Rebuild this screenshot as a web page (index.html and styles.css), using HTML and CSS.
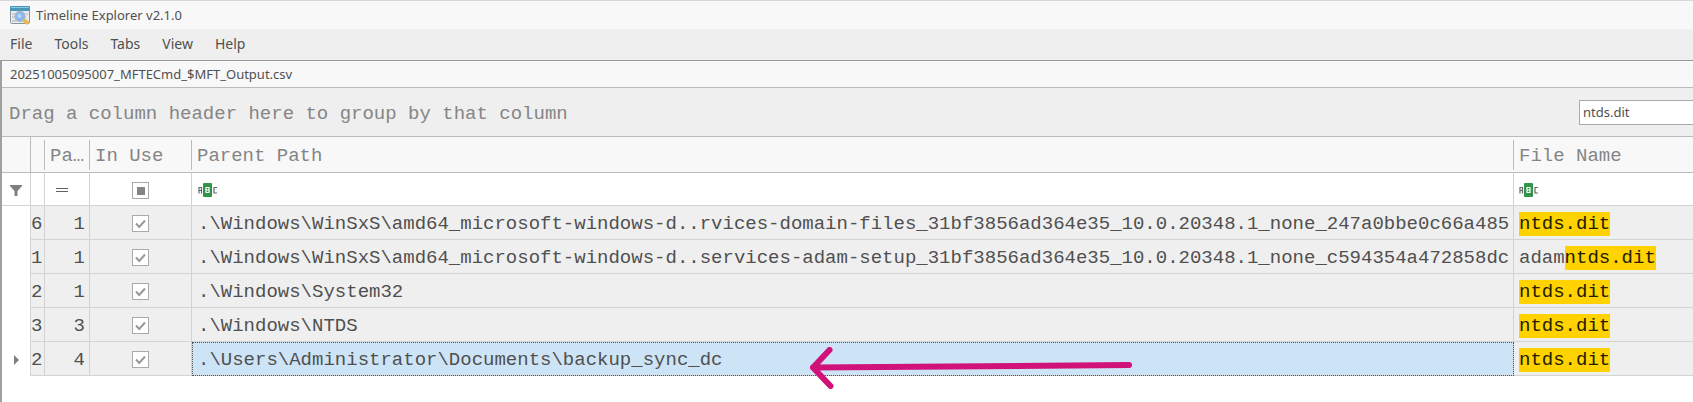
FILE: index.html
```html
<!DOCTYPE html>
<html lang="en">
<head>
<meta charset="utf-8">
<title>Timeline Explorer v2.1.0</title>
<link rel="stylesheet" href="styles.css">
</head>
<body>
<svg class="defs" aria-hidden="true">
  <symbol id="check" viewBox="0 0 17 17"><path d="M4 8.5 7.2 12 13 5.5" fill="none" stroke="#999" stroke-width="2"/></symbol>
  <symbol id="abc" viewBox="0 0 20 14">
    <path d="M1 10.500V4.500h2.500v6M1 7.500h2.500M19 4.500h-3v5.500h3" fill="none" stroke="#666" stroke-width="1.200"/>
    <rect x="5" y="0" width="9" height="14" rx="1" fill="#2e9549"/>
    <path d="M8 4.500h3v5H8zM8 7h3" fill="none" stroke="#fff" stroke-width="1.200"/>
  </symbol>
</svg>
<header class="titlebar">
  <svg class="app-icon" viewBox="0 0 20 19" aria-hidden="true">
    <rect x=".5" y=".5" width="19" height="17" rx="1" fill="#e9edef" stroke="#8a9499"/>
    <rect x="0" y="0" width="20" height="5" rx="1" fill="#4a96b6"/>
    <path d="M1 1.500h18" stroke="#8cc8de"/>
    <path d="M2 8h3M2 11h2M16 8h2M2 15h4" stroke="#a8afb3"/>
    <circle cx="10" cy="10.500" r="5" fill="#86b7f0" stroke="#a9b7c4" stroke-width="1.500"/>
    <circle cx="9.500" cy="10" r="2" fill="#b9d8fa"/>
    <path d="m15 15 2 1.500" stroke="#e9bd45" stroke-width="4" stroke-linecap="round"/>
  </svg>
  <span>Timeline Explorer v2.1.0</span>
</header>
<nav class="menu">
  <button type="button">File</button>
  <button type="button">Tools</button>
  <button type="button">Tabs</button>
  <button type="button">View</button>
  <button type="button">Help</button>
</nav>
<main class="window">
  <div class="tab">20251005095007_MFTECmd_$MFT_Output.csv</div>
  <div class="group-panel">
    <span>Drag a column header here to group by that column</span>
    <input class="search" type="text" value="ntds.dit" aria-label="Search">
  </div>
  <div class="grid-wrap">
    <table class="grid">
      <colgroup>
        <col class="c-mark"><col class="c-entry"><col class="c-parent"><col class="c-use"><col class="c-path"><col class="c-name">
      </colgroup>
      <thead>
        <tr class="heads">
          <th class="mark"></th><th></th><th>Pa…</th><th>In Use</th><th>Parent Path</th><th>File Name</th>
        </tr>
        <tr class="filters">
          <td class="mark"><svg class="funnel" viewBox="0 0 12 11" aria-hidden="true"><path d="M0 0h12v1L7.500 6v5h-3V6L0 1z" fill="#808080"/></svg></td>
          <td></td>
          <td class="op"><svg class="equals" viewBox="0 0 12 5" aria-hidden="true"><path d="M0 .5h12M0 3.500h12" stroke="#606060"/></svg></td>
          <td class="use"><label class="box"><input type="checkbox" aria-label="In use filter"><svg viewBox="0 0 17 17"><path d="M5 5h8v8H5z" fill="#858585"/></svg></label></td>
          <td><svg class="abc"><use href="#abc"/></svg></td>
          <td><svg class="abc"><use href="#abc"/></svg></td>
        </tr>
      </thead>
      <tbody>
        <tr><td class="mark"></td><td class="entry">6</td><td class="num">1</td><td class="use"><label class="box"><input type="checkbox" checked aria-label="In use"><svg><use href="#check"/></svg></label></td><td class="path">.\Windows\WinSxS\amd64_microsoft-windows-d..rvices-domain-files_31bf3856ad364e35_10.0.20348.1_none_247a0bbe0c66a485</td><td><mark>ntds.dit</mark></td></tr>
        <tr><td class="mark"></td><td class="entry">1</td><td class="num">1</td><td class="use"><label class="box"><input type="checkbox" checked aria-label="In use"><svg><use href="#check"/></svg></label></td><td class="path">.\Windows\WinSxS\amd64_microsoft-windows-d..services-adam-setup_31bf3856ad364e35_10.0.20348.1_none_c594354a472858dc</td><td>adam<mark>ntds.dit</mark></td></tr>
        <tr><td class="mark"></td><td class="entry">2</td><td class="num">1</td><td class="use"><label class="box"><input type="checkbox" checked aria-label="In use"><svg><use href="#check"/></svg></label></td><td class="path">.\Windows\System32</td><td><mark>ntds.dit</mark></td></tr>
        <tr><td class="mark"></td><td class="entry">3</td><td class="num">3</td><td class="use"><label class="box"><input type="checkbox" checked aria-label="In use"><svg><use href="#check"/></svg></label></td><td class="path">.\Windows\NTDS</td><td><mark>ntds.dit</mark></td></tr>
        <tr><td class="mark"><svg class="current" viewBox="0 0 5 10" aria-hidden="true"><path d="M0 0 5 5 0 10z" fill="#808080"/></svg></td><td class="entry">2</td><td class="num">4</td><td class="use"><label class="box"><input type="checkbox" checked aria-label="In use"><svg><use href="#check"/></svg></label></td><td class="path selected">.\Users\Administrator\Documents\backup_sync_dc</td><td><mark>ntds.dit</mark></td></tr>
      </tbody>
    </table>
    <svg class="arrow" viewBox="0 0 324 42" aria-hidden="true"><path d="M320 18 4 20.500M20.500 3 4 20.500 21.500 39" fill="none" stroke="#d01279" stroke-width="6" stroke-linecap="round" stroke-linejoin="round"/></svg>
  </div>
</main>
</body>
</html>
```
FILE: styles.css
```css
* { box-sizing: border-box; }
body {
  margin: 0;
  background: #fff;
  color: #505050;
  font: 13px/20px "Noto Sans", "Open Sans", sans-serif;
  overflow: hidden;
}
.defs { position: absolute; width: 0; height: 0; }
.titlebar {
  display: flex;
  align-items: center;
  gap: 6px;
  height: 29px;
  padding-left: 10px;
  background: #f8f8f8;
  border-top: 1px solid #d8d8d8;
}
.app-icon { width: 20px; height: 19px; }
.menu {
  display: flex;
  gap: 22px;
  height: 31px;
  padding: 0 10px 2px;
  background: #efefef;
}
.menu button {
  padding: 0;
  border: 0;
  background: none;
  color: inherit;
  font: inherit;
  font-size: 14px;
}
.window {
  min-height: calc(100vh - 60px);
  border-top: 1px solid #999;
  border-left: 2px solid #a0a0a0;
}
.tab {
  height: 27px;
  padding: 3px 8px;
  background: #f8f8f8;
  border-bottom: 1px solid #bbb;
}
.group-panel, .grid {
  font-family: "Liberation Mono", monospace;
  font-size: 19px;
  line-height: 24px;
}
.group-panel {
  display: flex;
  align-items: center;
  justify-content: space-between;
  height: 49px;
  padding-left: 7px;
  background: #efefef;
  border-bottom: 1px solid #bbb;
  color: #858585;
}
.group-panel span { padding-top: 3px; }
.search {
  width: 114px;
  height: 25px;
  padding: 0 3px;
  border: 1px solid #aaa;
  border-right: 0;
  background: #fff;
  color: #505050;
  font: 13px/20px "Noto Sans", "Open Sans", sans-serif;
}
.grid-wrap { position: relative; }
.grid {
  width: 100%;
  table-layout: fixed;
  border-collapse: separate;
  border-spacing: 0;
}
.c-mark { width: 29px; }
.c-entry { width: 14px; }
.c-parent { width: 45px; }
.c-use { width: 102px; }
.c-path { width: 1322px; }
.grid th, .grid td {
  height: 34px;
  padding: 2px 6px 0;
  border-right: 1px solid #d3d3d3;
  border-bottom: 1px solid #d3d3d3;
  background: #efefef;
  text-align: left;
  white-space: nowrap;
  overflow: hidden;
}
.grid tr > :last-child { border-right: 0; padding-left: 5px; }
.grid .heads th {
  height: 36px;
  padding: 2px 5px 0;
  border-right: 0;
  border-bottom-color: #bbb;
  background: linear-gradient(#bbb, #bbb) right center / 1px 30px no-repeat #f8f8f8;
  color: #858585;
  font-weight: 400;
}
.grid .heads th:last-child { background: #f8f8f8; }
.grid .heads .mark { background-size: 1px 100%; }
.grid .filters td { height: 33px; background: #fff; }
.grid .mark { background: #fff; text-align: center; padding: 2px 0 0; }
.grid tbody .mark { border-bottom: 0; }
.grid .entry { padding: 2px 0 0; }
.grid .num { text-align: right; padding-right: 4px; }
.grid .path { padding-right: 0; }
.grid .use { text-align: center; }
.grid .op { padding-left: 11px; }
.grid svg { display: block; }
.grid .funnel { width: 12px; height: 11px; margin: 0 auto; }
.grid .current { width: 5px; height: 10px; margin: 0 auto; }
.equals { width: 12px; height: 5px; }
.abc { width: 20px; height: 14px; }
.box {
  display: block;
  position: relative;
  width: 17px;
  height: 17px;
  margin: 0 auto;
}
.box input {
  display: block;
  appearance: none;
  width: 17px;
  height: 17px;
  margin: 0;
  border: 1px solid #aaa;
  background: #fff;
}
.box svg { position: absolute; inset: 0; width: 17px; height: 17px; }
.grid .selected {
  background: #cde4f7;
  outline: 1px dotted #505050;
  outline-offset: -1px;
}
mark {
  display: inline-block;
  background: #ffd200;
  color: #202000;
}
.arrow {
  position: absolute;
  left: 807px;
  top: 210px;
  width: 324px;
  height: 42px;
}
```
